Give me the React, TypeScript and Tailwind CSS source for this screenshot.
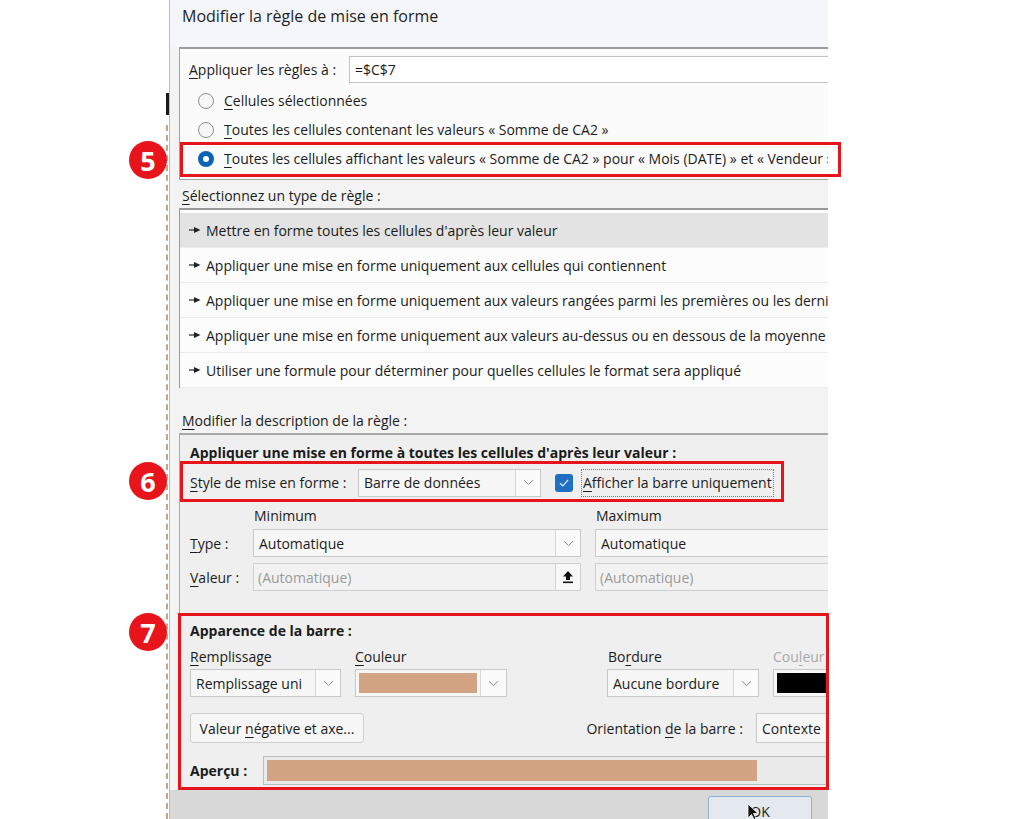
import React from "react";

const U = ({ children }: { children: React.ReactNode }) => (
  <span className="underline decoration-1 underline-offset-[3px]">{children}</span>
);

const Chevron = () => (
  <svg width="11" height="7" viewBox="0 0 11 7">
    <path d="M1 1.2l4.5 4.3 4.5-4.3" fill="none" stroke="#8a8a8a" strokeWidth="1" />
  </svg>
);

function Select({ className, children }: { className: string; children?: React.ReactNode }) {
  return (
    <div className={"flex h-[28px] border border-[#c9c9c9] bg-[#f7f7f7] " + className}>
      <div className="flex flex-1 items-center overflow-hidden whitespace-nowrap pl-[5px]">{children}</div>
      <div className="flex w-[25px] items-center justify-center border-l border-[#d6d6d6] bg-[#fafafa]">
        <Chevron />
      </div>
    </div>
  );
}

const ListArrow = () => (
  <svg width="12" height="8" viewBox="0 0 12 8" className="mr-[5px] shrink-0">
    <path d="M0 4h6" stroke="#222" strokeWidth="1.2" />
    <path d="M5 1L11.5 4L5 7z" fill="#222" />
  </svg>
);

const Radio = ({ checked }: { checked?: boolean }) =>
  checked ? (
    <div className="flex h-[16px] w-[16px] items-center justify-center rounded-full bg-[#0b63b6]">
      <div className="h-[6px] w-[6px] rounded-full bg-white" />
    </div>
  ) : (
    <div className="h-[16px] w-[16px] rounded-full border border-[#8c8c8c] bg-[#f7f7f7]" />
  );

const Badge = ({ n, className }: { n: string; className: string }) => (
  <div
    className={
      "absolute flex h-[38px] w-[38px] items-center justify-center rounded-full bg-[#e8141c] text-[27px] font-bold leading-none text-white " +
      className
    }
  >
    {n}
  </div>
);

export default function App() {
  const items = [
    "Mettre en forme toutes les cellules d'après leur valeur",
    "Appliquer une mise en forme uniquement aux cellules qui contiennent",
    "Appliquer une mise en forme uniquement aux valeurs rangées parmi les premières ou les dernières valeurs",
    "Appliquer une mise en forme uniquement aux valeurs au-dessus ou en dessous de la moyenne",
    "Utiliser une formule pour déterminer pour quelles cellules le format sera appliqué",
  ];
  return (
    <div className="relative flex h-[819px] w-[1024px] overflow-hidden bg-white font-['Open_Sans','Noto_Sans',sans-serif] text-[14px] text-[#1b1b1b]">
      {/* left background strip */}
      <div className="w-[166px] shrink-0" />
      <div className="flex w-[3px] shrink-0 flex-col">
        <div className="mt-[93px] h-[22px] w-[3px] bg-[#1a1a1a]" />
        <div className="mt-[10px] flex-1 border-l-2 border-dashed border-[#c9a386]" />
      </div>

      {/* dialog */}
      <div className="flex h-[819px] w-[659px] shrink-0 flex-col overflow-hidden border-l border-[#bdbdbd] bg-[#f3f3f3]">
        {/* title bar */}
        <div className="h-[47px] shrink-0 bg-[#f4f6fb] pl-[12px] pt-[4px] text-[16px] text-[#1f1f1f]">
          Modifier la règle de mise en forme
        </div>

        <div className="flex w-[760px] flex-col pl-[9px]">
          {/* apply box */}
          <div className="h-[133px] border border-t-2 border-[#a3a3a3] border-t-[#9a9a9a] bg-[#fbfbfb] pl-[9px]">
            <div className="mt-[7px] flex h-[27px] items-center">
              <div className="w-[160px] whitespace-nowrap">
                <U>A</U>ppliquer les règles à :
              </div>
              <div className="flex h-[27px] flex-1 items-center border border-[#c2c2c2] bg-white pl-[5px]">=$C$7</div>
            </div>
            <div className="mt-[3px] flex h-[29px] items-center pl-[9px]">
              <Radio />
              <span className="ml-[10px]">
                <U>C</U>ellules sélectionnées
              </span>
            </div>
            <div className="flex h-[29px] items-center pl-[9px]">
              <Radio />
              <span className="ml-[10px]">
                <U>T</U>outes les cellules contenant les valeurs « Somme de CA2 »
              </span>
            </div>
            <div className="flex h-[29px] items-center pl-[9px]">
              <Radio checked />
              <span className="ml-[10px] whitespace-nowrap">
                <U>T</U>outes les cellules affichant les valeurs « Somme de CA2 » pour « Mois (DATE) » et « Vendeur »
              </span>
            </div>
          </div>

          {/* rule type */}
          <div className="flex h-[28px] items-center pl-[3px] pt-[2px]">
            <span>
              <U>S</U>électionnez un type de règle :
            </span>
          </div>
          <div className="h-[180px] border border-t-2 border-[#9a9a9a] bg-[#fcfcfc] pt-[3px]">
            {items.map((t, i) => (
              <div
                key={i}
                className={
                  "flex h-[35px] items-center whitespace-nowrap border-b border-[#ececec] pl-[9px] " +
                  (i === 0 ? "bg-[#e3e3e3]" : "")
                }
              >
                <ListArrow />
                <span>{t}</span>
              </div>
            ))}
          </div>

          {/* description */}
          <div className="flex h-[45px] items-end pb-[2px] pl-[3px]">
            <span>
              <U>M</U>odifier la description de la règle :
            </span>
          </div>
          <div className="flex h-[357px] flex-col border border-t-2 border-[#a8a8a8] bg-[#efefef] pl-[10px]">
            <div className="mt-[8px] h-[20px] whitespace-nowrap font-bold leading-[20px]">
              Appliquer une mise en forme à toutes les cellules d'après leur valeur :
            </div>
            <div className="mt-[5px] flex h-[29px] items-center">
              <div className="w-[168px] whitespace-nowrap">
                <U>S</U>tyle de mise en forme :
              </div>
              <Select className="w-[183px]">Barre de données</Select>
              <div className="ml-[14px] flex h-[18px] w-[18px] items-center justify-center rounded-[3px] bg-[#1f6fc2]">
                <svg width="10" height="8" viewBox="0 0 10 8">
                  <path d="M1 4.2l2.8 2.6L9 1" stroke="#d6e6f8" fill="none" strokeWidth="1.2" />
                </svg>
              </div>
              <div className="ml-[8px] flex h-[28px] items-center whitespace-nowrap border border-dotted border-[#7a7a7a] px-[1px]">
                <span>
                  <U>A</U>fficher la barre uniquement
                </span>
              </div>
            </div>
            <div className="mt-[8px] flex h-[20px] items-center">
              <div className="w-[64px]" />
              <div className="w-[342px]">Minimum</div>
              <div>Maximum</div>
            </div>
            <div className="mt-[4px] flex h-[28px] items-center">
              <div className="w-[63px]">
                <U>T</U>ype :
              </div>
              <Select className="w-[328px]">Automatique</Select>
              <Select className="ml-[14px] w-[300px]">Automatique</Select>
            </div>
            <div className="mt-[6px] flex h-[28px] items-center">
              <div className="w-[63px]">
                <U>V</U>aleur :
              </div>
              <div className="flex h-[28px] w-[328px] border border-[#cfcfcf] bg-[#f2f2f2]">
                <div className="flex flex-1 items-center pl-[4px] text-[#9b9b9b]">(Automatique)</div>
                <div className="flex w-[25px] items-center justify-center border-l border-[#d3d3d3] bg-[#f8f8f8]">
                  <svg width="12" height="14" viewBox="0 0 12 14">
                    <path d="M6 1L1 6.5h3v3.5h4V6.5h3z" fill="#111" />
                    <rect x="1" y="11.5" width="10" height="1.6" fill="#111" />
                  </svg>
                </div>
              </div>
              <div className="ml-[14px] flex h-[28px] w-[300px] items-center border border-[#cfcfcf] bg-[#f2f2f2] pl-[4px] text-[#9b9b9b]">
                (Automatique)
              </div>
            </div>

            {/* bar appearance */}
            <div className="mt-[30px] h-[20px] font-bold leading-[20px]">Apparence de la barre :</div>
            <div className="mt-[5px] flex h-[20px] items-center">
              <div className="w-[165px]">
                <U>R</U>emplissage
              </div>
              <div className="w-[253px]">
                <U>C</U>ouleur
              </div>
              <div className="w-[165px]">
                Bo<U>r</U>dure
              </div>
              <div className="text-[#a9a9a9]">
                Cou<U>l</U>eur
              </div>
            </div>
            <div className="mt-[3px] flex h-[28px] items-center">
              <Select className="w-[151px]">Remplissage uni</Select>
              <div className="ml-[14px] flex h-[28px] w-[152px] border border-[#c9c9c9] bg-[#f7f7f7]">
                <div className="flex flex-1 items-center p-[3px]">
                  <div className="h-full w-full bg-[#d3a483]" />
                </div>
                <div className="flex w-[26px] items-center justify-center border-l border-[#d6d6d6] bg-[#fafafa]">
                  <Chevron />
                </div>
              </div>
              <Select className="ml-[100px] w-[152px]">Aucune bordure</Select>
              <div className="ml-[14px] flex h-[28px] w-[80px] border border-[#c9c9c9] bg-[#f7f7f7] p-[3px]">
                <div className="h-full w-full bg-black" />
              </div>
            </div>
            <div className="mt-[16px] flex h-[30px] items-center">
              <div className="flex h-[30px] w-[174px] items-center justify-center whitespace-nowrap rounded-[3px] border border-[#cfcfcf] bg-[#f6f6f6]">
                <span>
                  Valeur <U>n</U>égative et axe...
                </span>
              </div>
              <div className="flex w-[392px] justify-end whitespace-nowrap pr-[13px]">
                <span>
                  Orientation <U>d</U>e la barre :
                </span>
              </div>
              <div className="flex h-[30px] w-[120px] items-center border border-[#c9c9c9] bg-[#f7f7f7] pl-[5px]">
                Contexte
              </div>
            </div>
            <div className="mt-[13px] flex h-[29px] items-center">
              <div className="w-[73px] font-bold">Aperçu :</div>
              <div className="flex h-[29px] w-[640px] border border-[#bdbdbd] bg-[#eaeaea] p-[3px]">
                <div className="h-full w-[490px] bg-[#d3a483]" />
              </div>
            </div>
          </div>
        </div>

        {/* bottom buttons */}
        <div className="flex flex-1 justify-end bg-[#d8d8d8] pr-[16px] pt-[6px]">
          <div className="flex h-[32px] w-[104px] items-start justify-center rounded-[3px] border border-[#8fb1d3] bg-[#e3e9ef] pt-[4px]">
            <span>
              <U>O</U>K
            </span>
          </div>
        </div>
      </div>

      {/* annotations */}
      <div className="absolute left-[180px] top-[142px] h-[35px] w-[661px] border-[3px] border-[#e8141c]" />
      <div className="absolute left-[180px] top-[461px] h-[41px] w-[604px] border-[3px] border-[#e8141c]" />
      <div className="absolute left-[178px] top-[613px] h-[177px] w-[651px] border-[3px] border-[#e8141c]" />
      <Badge n="5" className="left-[129px] top-[141px]" />
      <Badge n="6" className="left-[129px] top-[462px]" />
      <Badge n="7" className="left-[129px] top-[613px]" />

      {/* mouse cursor */}
      <svg className="absolute left-[747px] top-[803px]" width="12" height="18" viewBox="0 0 12 18">
        <path d="M1 1v14l3.5-3.5 2.5 5 2-1-2.5-5H11z" fill="#111" stroke="#fff" strokeWidth="0.8" />
      </svg>
    </div>
  );
}
